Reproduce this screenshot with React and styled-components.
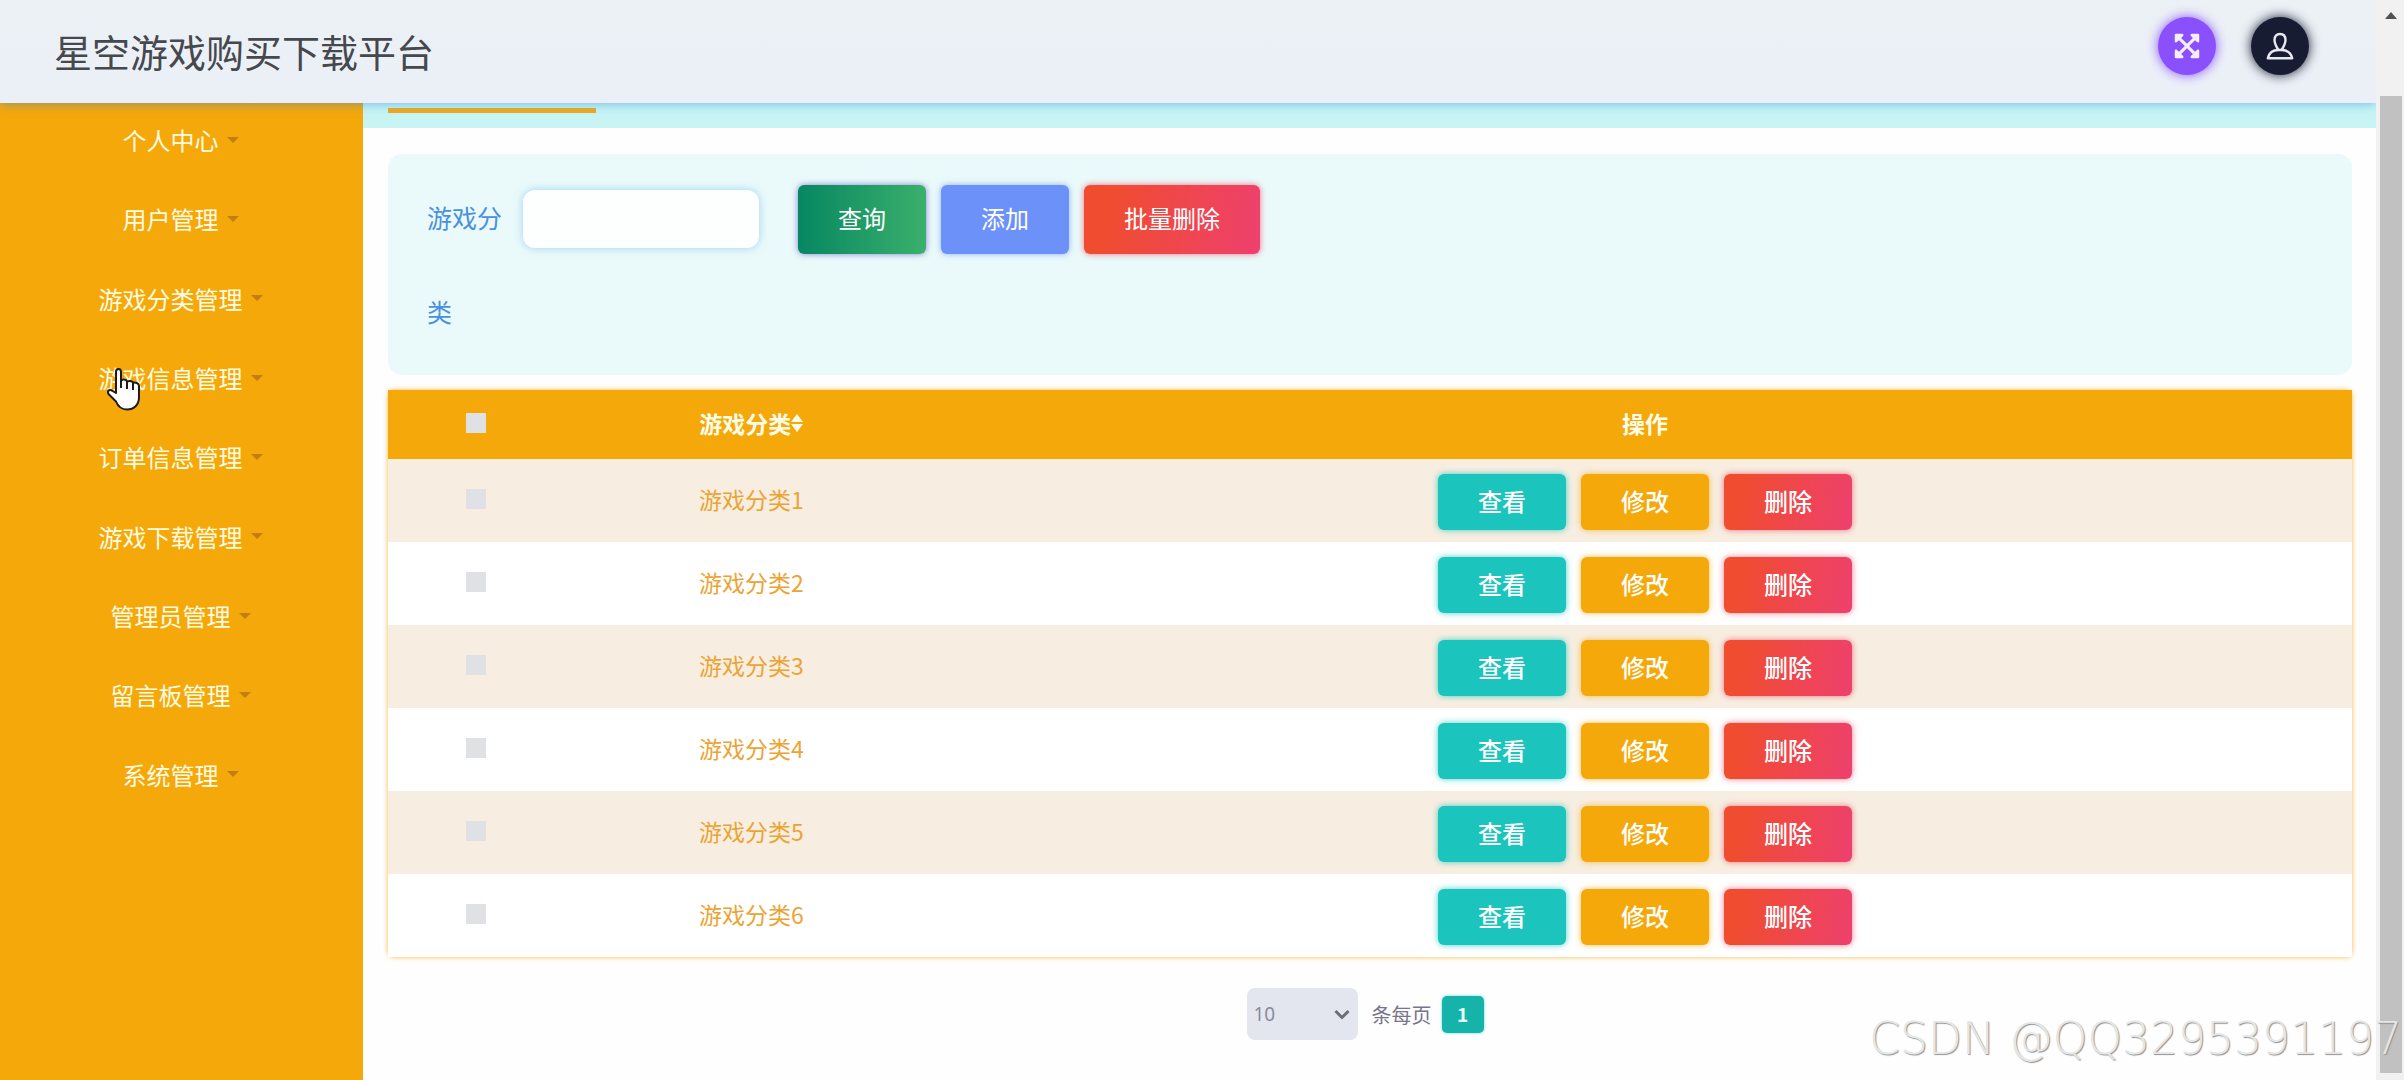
import { useState } from "react";
import styled, { createGlobalStyle, css } from "styled-components";
import { FaExpandArrowsAlt } from "react-icons/fa";

const GlobalStyle = createGlobalStyle`
  * {
    box-sizing: border-box;
  }

  body {
    margin: 0;
    background: #fefefe;
    font-family: "Noto Sans CJK SC", "Noto Sans", sans-serif;
  }

  button,
  input,
  select {
    font-family: inherit;
  }
`;

const Page = styled.div`
  position: relative;
  display: grid;
  grid-template-columns: minmax(0, 1fr) 28px;
  min-height: 100vh;
  overflow: hidden;
`;

const Shell = styled.div`
  display: flex;
  flex-direction: column;
  overflow: hidden;
`;

const Header = styled.header`
  position: relative;
  z-index: 1;
  display: flex;
  align-items: flex-start;
  justify-content: space-between;
  height: 103px;
  padding: 17px 67px 0 54px;
  background: linear-gradient(#ecf1f5, #ebf0f8);
  box-shadow: 0 1px 10px rgba(50, 140, 220, 0.55);
`;

const Title = styled.h1`
  margin: 0;
  font-size: 38px;
  font-weight: 400;
  line-height: 68px;
  color: #45484d;
`;

const HeaderActions = styled.div`
  display: flex;
  gap: 35px;
`;

const RoundButton = styled.button`
  display: flex;
  align-items: center;
  justify-content: center;
  width: 58px;
  height: 58px;
  padding: 0;
  border: 0;
  border-radius: 50%;
  background: ${({ $color }) => $color};
  box-shadow: 0 0 12px ${({ $color }) => $color};
  color: #f6eefb;
`;

const Body = styled.div`
  display: flex;
  flex: 1;
`;

const Sidebar = styled.nav`
  flex: 0 0 363px;
  background: #f5a80a;
`;

const Menu = styled.ul`
  display: grid;
  grid-auto-rows: 1fr;
  height: 714px;
  margin: 0;
  padding: 0;
  list-style: none;
`;

const MenuItem = styled.li`
  position: relative;
  display: flex;
  justify-content: center;
`;

const MenuLink = styled.a`
  display: flex;
  align-items: center;
  gap: 8px;
  padding: 0 2px 6px 0;
  font-size: 24px;
  color: #fffbe0;
  text-decoration: none;

  &::after {
    content: "";
    border: 6px solid transparent;
    border-top-color: #c47d10;
    border-bottom: 0;
  }
`;

const Pointer = styled.svg`
  position: absolute;
  top: 27px;
  left: 106px;
  width: 35px;
  height: 43px;
`;

const Main = styled.main`
  flex: 1;
  min-width: 0;
`;

const TabStrip = styled.div`
  height: 25px;
  padding: 5px 25px 0;
  background: #c8f5f4;
`;

const ActiveTab = styled.div`
  width: 208px;
  height: 5px;
  background: #f0aa1c;
`;

const Content = styled.div`
  padding: 26px 24px 0 25px;
`;

const SearchPanel = styled.form`
  display: flex;
  gap: 16px;
  padding: 16px 39px;
  border-radius: 14px;
  background: #eafafa;
`;

const SearchLabel = styled.label`
  width: 80px;
  padding-bottom: 1px;
  font-size: 25px;
  line-height: 94px;
  color: #4a90e0;
`;

const SearchControls = styled.div`
  display: flex;
  align-items: center;
  gap: 39px;
  height: 98px;
`;

const SearchInput = styled.input`
  width: 236px;
  height: 58px;
  padding: 0 16px;
  border: 0;
  border-radius: 12px;
  background: #fdffff;
  box-shadow: 0 0 8px rgba(90, 170, 240, 0.5);
  font-size: 24px;
`;

const Buttons = styled.div`
  display: flex;
  justify-content: center;
  gap: 15px;
`;

const tones = {
  search: css`
    background: linear-gradient(90deg, #078762, #3bb06c);
    box-shadow: 0 0 6px rgba(90, 80, 200, 0.7);
  `,
  add: css`
    background: #6c92fa;
    box-shadow: 0 0 6px rgba(108, 146, 250, 0.7);
  `,
  view: css`
    background: #1bc5bd;
    box-shadow: 0 0 6px rgba(27, 197, 189, 0.8);
  `,
  edit: css`
    background: #f5a80a;
    box-shadow: 0 0 6px rgba(245, 168, 10, 0.7);
  `,
  danger: css`
    background: linear-gradient(100deg, #f04c30 15%, #ee406e);
    box-shadow: 0 0 6px rgba(240, 64, 90, 0.7);
  `,
};

const Button = styled.button`
  height: ${({ $large }) => ($large ? "69px" : "56px")};
  padding: 0 40px 3px;
  border: 0;
  border-radius: 6px;
  font-size: 24px;
  font-weight: ${({ $large }) => ($large ? 400 : 500)};
  line-height: 36px;
  color: #fff;
  ${({ $tone }) => tones[$tone]}
`;

const Table = styled.table`
  width: 100%;
  margin-top: 15px;
  border-collapse: collapse;
  table-layout: fixed;
  border-radius: 6px;
  box-shadow: 0 0 5px rgba(245, 168, 10, 0.8);
  font-size: 23px;
  text-align: center;
`;

const HeadCell = styled.th`
  width: ${({ $width }) => $width};
  height: 69px;
  padding: 0 0 3px;
  background: #f5a80a;
  line-height: 34px;
  color: #fffde8;
`;

const SortLabel = styled.span`
  display: inline-flex;
  align-items: center;

  svg {
    width: 12px;
    height: 18px;
  }
`;

const Row = styled.tr`
  height: 83px;
  background: #fff;

  &:nth-child(odd) {
    background: #f7eee1;
  }
`;

const Cell = styled.td`
  padding: 0 0 3px;
  line-height: 34px;
  color: #eba434;
`;

const ActionCell = styled(Cell)`
  padding: 15px 0 12px;
`;

const Tick = styled.input`
  appearance: none;
  display: block;
  width: 20px;
  height: 20px;
  margin: 0 auto;
  background: #dfe1e4;

  &:checked {
    background: #1bc5bd;
  }
`;

const Pagination = styled.div`
  display: flex;
  align-items: center;
  justify-content: center;
  margin-top: 31px;
  padding-right: 10px;
`;

const PageSize = styled.label`
  display: flex;
  align-items: center;
  gap: 14px;
  font-size: 20px;
  color: #77758c;
`;

const SelectBox = styled.span`
  position: relative;

  svg {
    position: absolute;
    top: 21px;
    right: 8px;
    width: 16px;
    height: 11px;
    pointer-events: none;
  }
`;

const Select = styled.select`
  appearance: none;
  display: block;
  width: 111px;
  height: 52px;
  padding: 0 7px;
  border: 0;
  border-radius: 8px;
  background: #e4e6ef;
  font-family: "Noto Sans", sans-serif;
  font-size: 19px;
  color: #8a8a9e;
`;

const PageButton = styled.button`
  width: 42px;
  height: 37px;
  margin-left: 10px;
  padding: 0 0 2px;
  border: 0;
  border-radius: 5px;
  background: #15b3aa;
  box-shadow: 0 0 3px rgba(27, 197, 189, 0.7);
  font-size: 19px;
  font-weight: 700;
  color: #e8fffc;
`;

const Scrollbar = styled.div`
  display: flex;
  flex-direction: column;
  align-items: center;
  padding: 12px 0 7px 2px;
  background: #f1f1f1;

  &::before {
    content: "";
    border: 6px solid transparent;
    border-top: 0;
    border-bottom: 7px solid #505050;
    margin-bottom: 77px;
  }
`;

const Thumb = styled.div`
  flex: 1;
  width: 22px;
  background: #c1c1c1;
`;

const Watermark = styled.div`
  position: absolute;
  right: 2px;
  bottom: 15px;
  z-index: 2;
  font-family: "DejaVu Sans Light", "DejaVu Sans", sans-serif;
  font-size: 44px;
  font-weight: 200;
  line-height: 52px;
  color: #e6e6e6;
  text-shadow: 1px 1px 1px #909090;
  pointer-events: none;
`;

const menu = [
  "个人中心",
  "用户管理",
  "游戏分类管理",
  "游戏信息管理",
  "订单信息管理",
  "游戏下载管理",
  "管理员管理",
  "留言板管理",
  "系统管理",
];

const categories = [1, 2, 3, 4, 5, 6].map((id) => ({ id, name: `游戏分类${id}` }));

const UserIcon = () => (
  <svg width="28" height="28" viewBox="0 0 28 28" fill="none" stroke="#e9e9f2" strokeWidth="2.4" strokeLinejoin="round">
    <path d="M12.500 18C10.500 15 8.500 11.500 8.500 8c0-3.800 2-6 5.500-6s5.500 2.200 5.500 6c0 3.500-2 7-4 10" />
    <path d="M1.800 26.200C3 21 7 18 12.500 18h3c5.500 0 9.500 3 10.700 8.200z" />
  </svg>
);

const HandPointer = () => (
  <Pointer viewBox="0 0 35 43" fill="#fff" stroke="#1c1c1c" strokeWidth="2" strokeLinejoin="round" aria-hidden="true">
    <path d="M10 25V4c0-4 5-4 5 0v9c1-2 6-2 6 1 1-2 6-1 6 1 2-1 6 0 6 3v11c0 8-5 12.500-12 12.500-6 0-9-3-11-8L2.500 26c-2-4 2-5 4-3z" />
    <path d="M15 12v8M21 14v7M27 15v7" fill="none" />
  </Pointer>
);

export default function App() {
  const [keyword, setKeyword] = useState("");
  const [selected, setSelected] = useState([]);

  const allSelected = selected.length === categories.length;

  const toggleAll = () => setSelected(allSelected ? [] : categories.map((c) => c.id));

  const toggle = (id) =>
    setSelected((prev) => (prev.includes(id) ? prev.filter((x) => x !== id) : [...prev, id]));

  return (
    <Page>
      <GlobalStyle />
      <Shell>
        <Header>
          <Title>星空游戏购买下载平台</Title>
          <HeaderActions>
            <RoundButton $color="#8950fc" aria-label="全屏">
              <FaExpandArrowsAlt size={28} />
            </RoundButton>
            <RoundButton $color="#181c32" aria-label="用户">
              <UserIcon />
            </RoundButton>
          </HeaderActions>
        </Header>
        <Body>
          <Sidebar>
            <Menu>
              {menu.map((item) => (
                <MenuItem key={item}>
                  <MenuLink href="#">{item}</MenuLink>
                  {item === "游戏信息管理" && <HandPointer />}
                </MenuItem>
              ))}
            </Menu>
          </Sidebar>
          <Main>
            <TabStrip>
              <ActiveTab />
            </TabStrip>
            <Content>
              <SearchPanel onSubmit={(e) => e.preventDefault()}>
                <SearchLabel htmlFor="category">游戏分类</SearchLabel>
                <SearchControls>
                  <SearchInput id="category" value={keyword} onChange={(e) => setKeyword(e.target.value)} />
                  <Buttons>
                    <Button $large $tone="search">查询</Button>
                    <Button $large $tone="add" type="button">添加</Button>
                    <Button $large $tone="danger" type="button">批量删除</Button>
                  </Buttons>
                </SearchControls>
              </SearchPanel>
              <Table>
                <thead>
                  <tr>
                    <HeadCell $width="9%">
                      <Tick type="checkbox" aria-label="全选" checked={allSelected} onChange={toggleAll} />
                    </HeadCell>
                    <HeadCell $width="19%">
                      <SortLabel>
                        游戏分类
                        <svg viewBox="0 0 12 18" fill="currentColor" aria-hidden="true">
                          <path d="M6 0l6 8H0zM6 18l6-8H0z" />
                        </svg>
                      </SortLabel>
                    </HeadCell>
                    <HeadCell>操作</HeadCell>
                  </tr>
                </thead>
                <tbody>
                  {categories.map(({ id, name }) => (
                    <Row key={id}>
                      <Cell>
                        <Tick
                          type="checkbox"
                          aria-label={name}
                          checked={selected.includes(id)}
                          onChange={() => toggle(id)}
                        />
                      </Cell>
                      <Cell>{name}</Cell>
                      <ActionCell>
                        <Buttons>
                          <Button $tone="view">查看</Button>
                          <Button $tone="edit">修改</Button>
                          <Button $tone="danger">删除</Button>
                        </Buttons>
                      </ActionCell>
                    </Row>
                  ))}
                </tbody>
              </Table>
              <Pagination>
                <PageSize>
                  <SelectBox>
                    <Select defaultValue="10">
                      <option>10</option>
                      <option>20</option>
                      <option>50</option>
                    </Select>
                    <svg viewBox="0 0 16 11" fill="none" stroke="#6d6d7a" strokeWidth="3">
                      <path d="M1.500 2L8 8.500 14.500 2" />
                    </svg>
                  </SelectBox>
                  条每页
                </PageSize>
                <PageButton>1</PageButton>
              </Pagination>
            </Content>
          </Main>
        </Body>
      </Shell>
      <Scrollbar aria-hidden="true">
        <Thumb />
      </Scrollbar>
      <Watermark>CSDN @QQ3295391197</Watermark>
    </Page>
  );
}
